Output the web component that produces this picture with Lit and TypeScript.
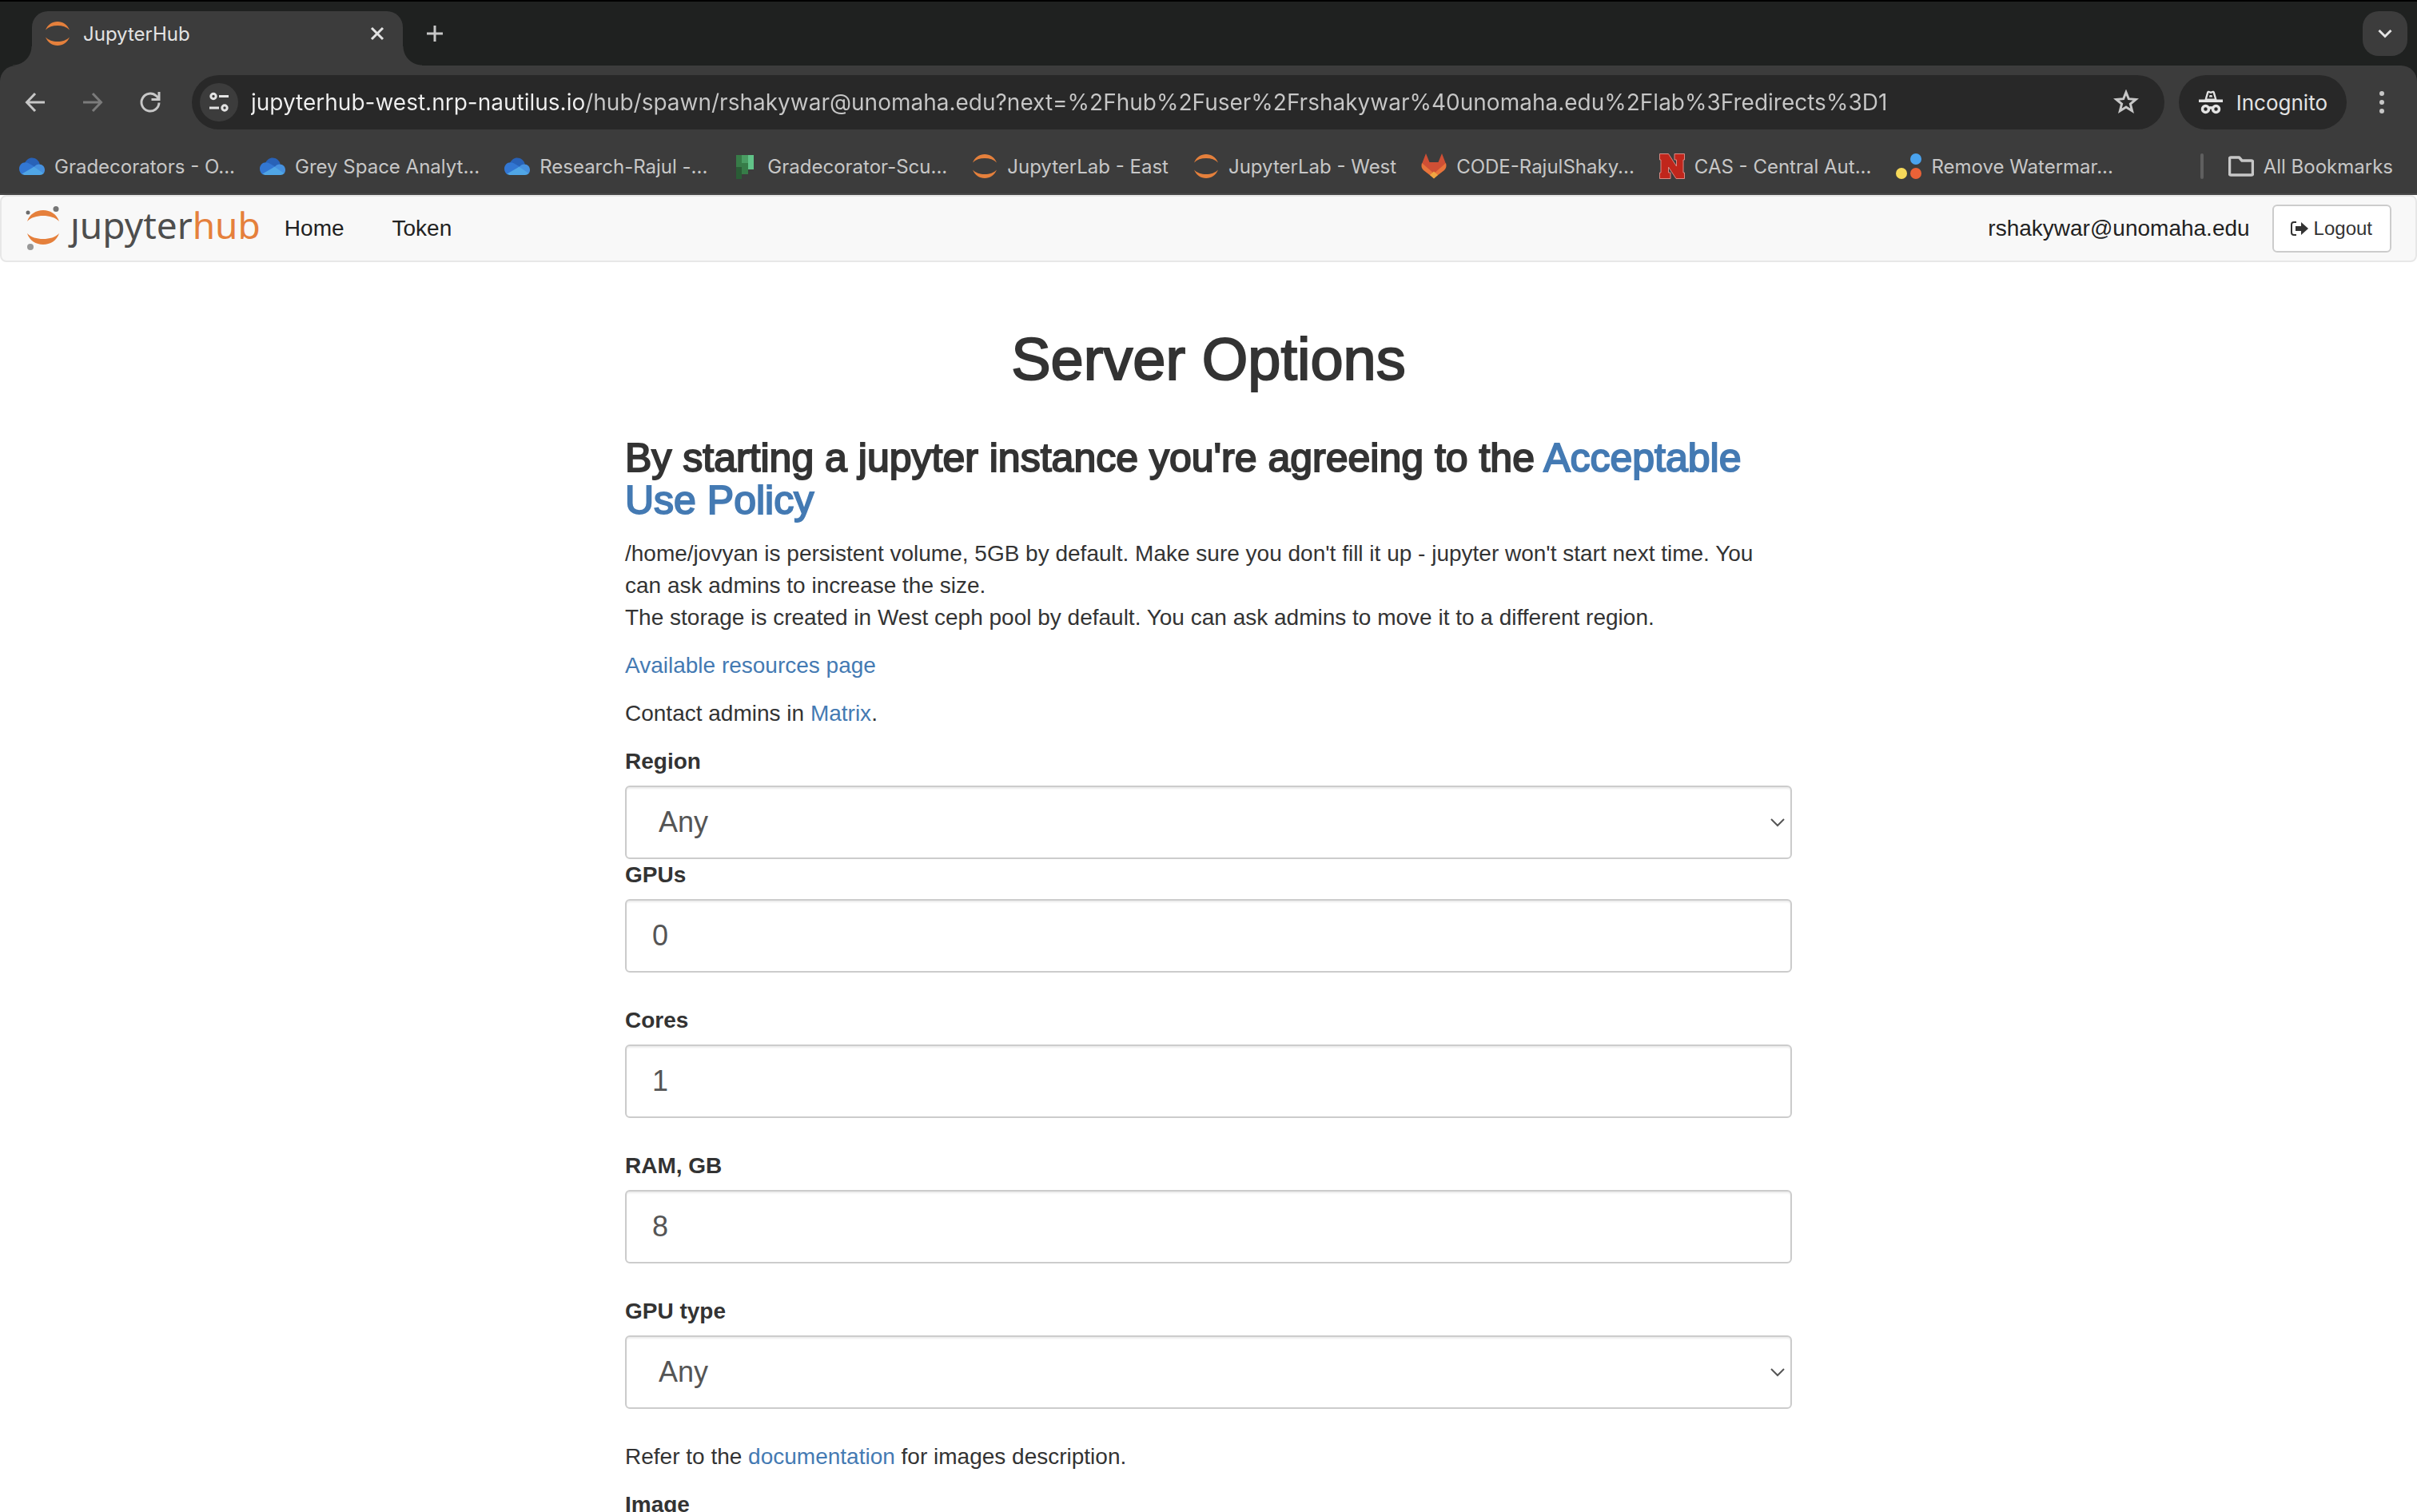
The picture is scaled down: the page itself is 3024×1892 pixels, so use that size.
import { LitElement, html, css, TemplateResult } from "lit";
import { customElement, property } from "lit/decorators.js";

const jupyterIcon = html`<svg class="icon" viewBox="0 0 32 32" aria-hidden="true">
  <g fill="#e5803c">
    <path d="M1 11.5C3.6 4.900 9.400 1 16 1s12.400 3.900 15 10.500C27.500 7.800 22 6 16 6S4.500 7.800 1 11.500z" />
    <path d="M1 20.500C3.600 27.100 9.400 31 16 31s12.400-3.900 15-10.500C27.500 24.200 22 26 16 26S4.500 24.200 1 20.500z" />
  </g>
</svg>`;

const cloudIcon = html`<svg class="icon" viewBox="0 0 32 32" aria-hidden="true">
  <path fill="#2862b8" d="M7 12C9 8 12 5.500 16 5.500c4.800 0 8.700 3.400 9.700 8L20 18 7 12z" />
  <path fill="#3277d3" d="M7.500 11.200c2.500 0 4.300.8 6 2L21 17.500 4 26.500C1.700 25 0 22.500 0 19.200c0-4.500 3.400-8 7.500-8z" />
  <path fill="#4691df" d="M19 16.500c1.600-2 3.600-3 6-3 4 0 7 3 7 7 0 2-.6 3.500-1.700 4.800L17 18z" />
  <path fill="#50a6e6" d="M18.500 16.800 30.600 25c-1.200 1.300-2.800 2-4.600 2H8c-1.700 0-3.200-.5-4.500-1.500z" />
</svg>`;

const plannerIcon = html`<svg class="icon" viewBox="0 0 32 32" aria-hidden="true">
  <path fill="#377c48" d="M5 2h7v15H5z" />
  <path fill="#2a5c36" d="M5 17h7v15H5z" />
  <path fill="#4a9d63" d="M12 2h8v10h-8z" />
  <path fill="#377c48" d="M12 12h8v14h-8z" />
  <path fill="#61c388" d="M20 2h7v18h-7z" />
</svg>`;

const foxIcon = html`<svg class="icon" viewBox="0 0 32 32" aria-hidden="true">
  <path fill="#cf4f35" d="M6 0 10.500 11h11L26 0 31 13 16 31 1 13z" />
  <path fill="#e8743b" d="M1 12 16 25 31 12c1 3.500.6 6.500-2 9L16 31 3 21c-2.600-2.500-3-5.500-2-9z" />
  <path fill="#f0a642" d="M16 22.500 21 27l-5 4.500L11 27z" />
</svg>`;

const blockNIcon = html`<svg class="icon" viewBox="0 0 32 32" aria-hidden="true">
  <path
    fill="#c0261c"
    stroke="#d98a84"
    stroke-width="1"
    d="M.5.500h11L21.500 16V8H19V.500h12.500V8H30v16h1.500v7.500H21L11.500 17v7H14v7.500H.5V24H2V8H.5z"
  />
</svg>`;

const dotsIcon = html`<svg class="icon" viewBox="0 0 32 32" aria-hidden="true">
  <circle cx="25" cy="7" r="7" fill="#4aa3ee" />
  <circle cx="7" cy="25" r="7" fill="#f6d95a" />
  <circle cx="25" cy="25" r="7" fill="#ea6237" />
</svg>`;

interface Bookmark {
  icon: TemplateResult;
  title: string;
}

const bookmarks: Bookmark[] = [
  { icon: cloudIcon, title: "Gradecorators - O..." },
  { icon: cloudIcon, title: "Grey Space Analyt..." },
  { icon: cloudIcon, title: "Research-Rajul -..." },
  { icon: plannerIcon, title: "Gradecorator-Scu..." },
  { icon: jupyterIcon, title: "JupyterLab - East" },
  { icon: jupyterIcon, title: "JupyterLab - West" },
  { icon: foxIcon, title: "CODE-RajulShaky..." },
  { icon: blockNIcon, title: "CAS - Central Aut..." },
  { icon: dotsIcon, title: "Remove Watermar..." },
];

/** Tab strip, toolbar and bookmarks bar. */
@customElement("browser-chrome")
export class BrowserChrome extends LitElement {
  static styles = css`
    :host {
      display: block;
      font-family: Inter, "Liberation Sans", sans-serif;
      color: #e3e3e3;
      background: #1f2120;
      border-top: 2px solid #000;
    }
    button {
      font: inherit;
      color: inherit;
      background: none;
      border: 0;
      padding: 0;
      display: flex;
      align-items: center;
      justify-content: center;
    }
    .icon {
      width: 32px;
      height: 32px;
      flex: none;
      display: block;
    }
    .strip {
      display: flex;
      height: 80px;
      padding: 12px 12px 0 40px;
      box-sizing: border-box;
      align-items: flex-start;
    }
    .tab {
      position: relative;
      width: 464px;
      height: 68px;
      box-sizing: border-box;
      padding: 0 20px 12px 16px;
      display: flex;
      align-items: center;
      background: #3c3c3c;
      border-radius: 20px 20px 0 0;
      font-size: 24px;
    }
    .tab::before,
    .tab::after {
      content: "";
      position: absolute;
      bottom: 0;
      width: 24px;
      height: 24px;
    }
    .tab::before {
      right: 100%;
      background: radial-gradient(circle at 0 0, transparent 23px, #3c3c3c 24px);
    }
    .tab::after {
      left: 100%;
      background: radial-gradient(circle at 100% 0, transparent 23px, #3c3c3c 24px);
    }
    .tab-title {
      flex: 1;
      padding-left: 16px;
    }
    .new-tab {
      width: 56px;
      height: 56px;
      margin-left: 12px;
    }
    .spacer {
      flex: 1;
    }
    .tab-search {
      width: 56px;
      height: 56px;
      border-radius: 20px;
      background: #3c3c3c;
    }
    .toolbar {
      display: flex;
      align-items: center;
      height: 92px;
      padding: 0 24px 0 20px;
      background: #3c3c3c;
      border-radius: 20px 20px 0 0;
    }
    .nav {
      display: flex;
      gap: 24px;
      margin-right: 28px;
    }
    .nav button {
      width: 48px;
      height: 48px;
      color: #c7c7c7;
    }
    .nav .dim {
      color: #7b7b7b;
    }
    .omnibox {
      flex: 1;
      display: flex;
      align-items: center;
      height: 68px;
      padding: 0 32px 0 10px;
      box-sizing: border-box;
      border-radius: 34px;
      background: #282828;
    }
    .site-info {
      width: 48px;
      height: 48px;
      border-radius: 50%;
      background: #3c3c3c;
    }
    /* The host part of the address is brighter than the path after it. */
    .url {
      flex: 1;
      min-width: 0;
      margin: 0 16px;
      padding: 0;
      border: 0;
      outline: 0;
      background: linear-gradient(90deg, #f0f0f0 420px, #c7c7c7 420px);
      background-clip: text;
      -webkit-background-clip: text;
      color: transparent;
      font: inherit;
      font-size: 28px;
    }
    .incognito {
      height: 68px;
      margin: 0 24px 0 18px;
      padding: 0 24px;
      gap: 16px;
      border-radius: 34px;
      background: #282828;
      font-size: 26px;
    }
    .menu {
      width: 40px;
      height: 48px;
    }
    .bookmarks {
      display: flex;
      align-items: center;
      height: 68px;
      padding: 0 30px 0 24px;
      gap: 31px;
      background: #3c3c3c;
      border-bottom: 2px solid #484848;
      font-size: 24px;
      color: #c7c7c7;
    }
    .bookmark {
      display: flex;
      align-items: center;
      gap: 12px;
      color: inherit;
      text-decoration: none;
      white-space: nowrap;
    }
    .divider {
      width: 4px;
      height: 32px;
      border-radius: 2px;
      background: #5f5f5f;
      margin-left: auto;
    }
  `;

  render() {
    return html`
      <div class="strip">
        <div class="tab">
          ${jupyterIcon}
          <span class="tab-title">JupyterHub</span>
          <button aria-label="Close tab">
            <svg width="24" height="24" viewBox="0 0 24 24">
              <path d="M5 5l14 14M19 5L5 19" stroke="#e3e3e3" stroke-width="3" />
            </svg>
          </button>
        </div>
        <button class="new-tab" aria-label="New tab">
          <svg width="24" height="24" viewBox="0 0 24 24">
            <path d="M12 2v20M2 12h20" stroke="#c7c7c7" stroke-width="3" />
          </svg>
        </button>
        <span class="spacer"></span>
        <button class="tab-search" aria-label="Search tabs">
          <svg width="20" height="20" viewBox="0 0 20 20">
            <path d="M2.500 6 10 13.500 17.500 6" fill="none" stroke="#e3e3e3" stroke-width="3" />
          </svg>
        </button>
      </div>
      <div class="toolbar">
        <div class="nav">
          <button aria-label="Back">
            <svg width="28" height="28" viewBox="0 0 28 28" fill="none" stroke="currentColor" stroke-width="3">
              <path d="M26 14H4M14 3 3.500 14 14 25" />
            </svg>
          </button>
          <button class="dim" aria-label="Forward">
            <svg width="28" height="28" viewBox="0 0 28 28" fill="none" stroke="currentColor" stroke-width="3">
              <path d="M2 14h22M14 3l10.500 11L14 25" />
            </svg>
          </button>
          <button aria-label="Reload">
            <svg width="28" height="28" viewBox="0 0 28 28" fill="none" stroke="currentColor" stroke-width="3">
              <path d="M25 14.500A11 11 0 1 1 21.500 6L25 9.500M25 1v9.500h-9.500" />
            </svg>
          </button>
        </div>
        <div class="omnibox">
          <button class="site-info" aria-label="View site information">
            <svg width="24" height="26" viewBox="0 0 24 26" fill="none" stroke="#e3e3e3" stroke-width="3">
              <circle cx="5" cy="5.500" r="3.200" />
              <path d="M12 5.500h12M0 20h12" />
              <circle cx="19" cy="20" r="3.200" />
            </svg>
          </button>
          <input
            class="url"
            aria-label="Address and search bar"
            .value=${"jupyterhub-west.nrp-nautilus.io/hub/spawn/rshakywar@unomaha.edu?next=%2Fhub%2Fuser%2Frshakywar%40unomaha.edu%2Flab%3Fredirects%3D1"}
          />
          <button aria-label="Bookmark this tab">
            <svg width="32" height="32" viewBox="0 0 32 32">
              <path
                fill="none"
                stroke="#c7c7c7"
                stroke-width="3"
                d="M16 3.500l3.300 8.200 8.900.7-6.800 5.700 2.200 8.600-7.600-4.700-7.600 4.700 2.200-8.600-6.800-5.700 8.900-.7z"
              />
            </svg>
          </button>
        </div>
        <button class="incognito">
          <svg width="32" height="32" viewBox="0 0 32 32">
            <path
              fill="#e3e3e3"
              d="M8.500 12.500 11 3.500c.4-1.500 2-2 3.200-1.400 1.200.6 2.400.6 3.600 0C19 1.500 20.600 2 21 3.500l2.500 9H31v3.500H1v-3.500z"
            />
            <path fill="none" stroke="#282828" stroke-width="2" d="M12.500 10.500 14 5.500q2 1 4 0l1.500 5z" />
            <g fill="none" stroke="#e3e3e3" stroke-width="3.500">
              <circle cx="9.500" cy="24.500" r="4" />
              <circle cx="22.500" cy="24.500" r="4" />
              <path d="M13 23.500q3-1.500 6 0" />
            </g>
          </svg>
          <span>Incognito</span>
        </button>
        <button class="menu" aria-label="Menu">
          <svg width="8" height="28" viewBox="0 0 8 28" fill="#c7c7c7">
            <circle cx="4" cy="3" r="3" />
            <circle cx="4" cy="14" r="3" />
            <circle cx="4" cy="25" r="3" />
          </svg>
        </button>
      </div>
      <nav class="bookmarks" aria-label="Bookmarks">
        ${bookmarks.map((b) => html`<a class="bookmark" href="#">${b.icon}<span>${b.title}</span></a>`)}
        <span class="divider"></span>
        <a class="bookmark" href="#">
          <svg class="icon" viewBox="0 0 32 32">
            <path
              fill="none"
              stroke="#c7c7c7"
              stroke-width="3.500"
              stroke-linejoin="round"
              d="M1.500 6.500v19a1.500 1.500 0 0 0 1.500 1.500h26a1.500 1.500 0 0 0 1.500-1.500v-15A1.500 1.500 0 0 0 29 9H17l-3.500-4H3a1.500 1.500 0 0 0-1.500 1.500z"
            />
          </svg>
          <span>All Bookmarks</span>
        </a>
      </nav>
    `;
  }
}

/** Site header with the logo, the page links and the signed-in user. */
@customElement("hub-navbar")
export class HubNavbar extends LitElement {
  static styles = css`
    :host {
      display: flex;
      align-items: center;
      height: 80px;
      padding: 0 30px;
      border: 2px solid #e7e7e7;
      border-radius: 8px;
      background: #f8f8f8;
      font-family: "Liberation Sans", Arial, sans-serif;
      font-size: 28px;
      color: #222;
    }
    a {
      color: inherit;
      text-decoration: none;
    }
    .brand {
      display: flex;
      align-items: flex-start;
      gap: 12px;
    }
    .wordmark {
      font-family: "Noto Sans", sans-serif;
      font-size: 46px;
      line-height: 50px;
      color: #4e4e4e;
    }
    .hub {
      color: #e5803c;
    }
    .link {
      padding: 0 30px;
    }
    .user {
      margin: 0 28px 0 auto;
    }
    .logout {
      display: flex;
      align-items: center;
      gap: 6px;
      height: 60px;
      padding: 0 22px 0 20px;
      border: 2px solid #ccc;
      border-radius: 6px;
      background: #fff;
      font: inherit;
      font-size: 24px;
      color: #333;
    }
  `;

  render() {
    return html`
      <a class="brand" href="#" aria-label="JupyterHub">
        <svg width="44" height="60" viewBox="0 0 44 60">
          <g fill="#e5803c">
            <path d="M2 21C5 12 13 7 22 7s17 5 20 14c-5-5-12-7-20-7S7 16 2 21z" />
            <path d="M2 36c3 9 11 14 20 14s17-5 20-14c-5 5-12 7-20 7S7 41 2 36z" />
          </g>
          <circle cx="3" cy="10" r="2.500" fill="#6b6b6b" />
          <circle cx="38" cy="5.500" r="3.500" fill="#757575" />
          <circle cx="6" cy="53" r="4" fill="#989898" />
        </svg>
        <span class="wordmark">ȷupyter<span class="hub">hub</span></span>
      </a>
      <a class="link" href="#">Home</a>
      <a class="link" href="#">Token</a>
      <span class="user">rshakywar@unomaha.edu</span>
      <button class="logout">
        <svg width="24" height="20" viewBox="0 0 24 20">
          <path d="M8 2H5a3 3 0 0 0-3 3v10a3 3 0 0 0 3 3h3" fill="none" stroke="#333" stroke-width="2" />
          <path d="M14 2l9 8-9 8v-5H7V7h7z" fill="#333" />
        </svg>
        <span>Logout</span>
      </button>
    `;
  }
}

interface Field {
  id: string;
  label: string;
  kind: "select" | "number";
  value: string;
}

const fields: Field[] = [
  { id: "region", label: "Region", kind: "select", value: "Any" },
  { id: "gpus", label: "GPUs", kind: "number", value: "0" },
  { id: "cores", label: "Cores", kind: "number", value: "1" },
  { id: "ram", label: "RAM, GB", kind: "number", value: "8" },
  { id: "gputype", label: "GPU type", kind: "select", value: "Any" },
];

/** The form in which the user picks the resources of a server. */
@customElement("server-options")
export class ServerOptions extends LitElement {
  @property({ attribute: false }) fields: Field[] = fields;

  static styles = css`
    :host {
      display: block;
      max-width: 1460px;
      margin: 0 auto;
      padding: 82px 32px 0;
      font-family: "Liberation Sans", Arial, sans-serif;
      font-size: 28px;
      line-height: 40px;
      color: #333;
    }
    a {
      color: #447ab3;
      text-decoration: none;
    }
    h1,
    h3 {
      font-weight: 400;
      -webkit-text-stroke: 2px currentColor;
    }
    h1 {
      margin: 0 0 58px;
      font-size: 74px;
      line-height: 79px;
      text-align: center;
    }
    h3 {
      margin: 0 0 20px;
      font-size: 50px;
      line-height: 53px;
    }
    h3 a {
      -webkit-text-stroke-color: #447ab3;
    }
    p {
      margin: 0 0 20px;
    }
    label {
      display: block;
      margin-bottom: 10px;
      font-weight: 700;
    }
    .field {
      margin-bottom: 40px;
    }
    .tight {
      margin-bottom: 0;
    }
    .box {
      position: relative;
    }
    .control {
      display: block;
      width: 100%;
      height: 92px;
      box-sizing: border-box;
      padding: 0 32px;
      border: 2px solid #ccc;
      border-radius: 6px;
      background: #fff;
      box-shadow: inset 0 2px 2px rgba(0, 0, 0, 0.075);
      font: inherit;
      font-size: 36px;
      color: #555;
      appearance: none;
    }
    input.control {
      appearance: textfield;
    }
    select.control {
      padding: 0 40px;
    }
    .arrow {
      position: absolute;
      right: 8px;
      top: 50%;
      margin-top: -6px;
      pointer-events: none;
    }
  `;

  private control(f: Field) {
    if (f.kind === "number") {
      return html`<input class="control" id=${f.id} type="number" .value=${f.value} />`;
    }
    return html`
      <div class="box">
        <select class="control" id=${f.id}>
          <option>${f.value}</option>
        </select>
        <svg class="arrow" width="20" height="12" viewBox="0 0 20 12">
          <path d="M2 2l8 8 8-8" fill="none" stroke="#555" stroke-width="2" />
        </svg>
      </div>
    `;
  }

  render() {
    return html`
      <h1>Server Options</h1>
      <form>
        <h3>By starting a jupyter instance you're agreeing to the <a href="#">Acceptable Use Policy</a></h3>
        <p>
          /home/jovyan is persistent volume, 5GB by default. Make sure you don't fill it up - jupyter won't start next
          time. You can ask admins to increase the size.<br />
          The storage is created in West ceph pool by default. You can ask admins to move it to a different region.
        </p>
        <p><a href="#">Available resources page</a></p>
        <p>Contact admins in <a href="#">Matrix</a>.</p>
        ${this.fields.map(
          (f) => html`
            <div class="field ${f.id === "region" ? "tight" : ""}">
              <label for=${f.id}>${f.label}</label>
              ${this.control(f)}
            </div>
          `,
        )}
        <p>Refer to the <a href="#">documentation</a> for images description.</p>
        <label for="image">Image</label>
        <select class="control" id="image"></select>
      </form>
    `;
  }
}

@customElement("app-root")
export class AppRoot extends LitElement {
  static styles = css`
    :host {
      display: flex;
      flex-direction: column;
      height: 100vh;
      overflow: hidden;
      background: #fff;
    }
    .page {
      flex: 1;
      min-height: 0;
      overflow: hidden;
    }
  `;

  render() {
    return html`
      <browser-chrome></browser-chrome>
      <div class="page">
        <hub-navbar></hub-navbar>
        <server-options></server-options>
      </div>
    `;
  }
}
